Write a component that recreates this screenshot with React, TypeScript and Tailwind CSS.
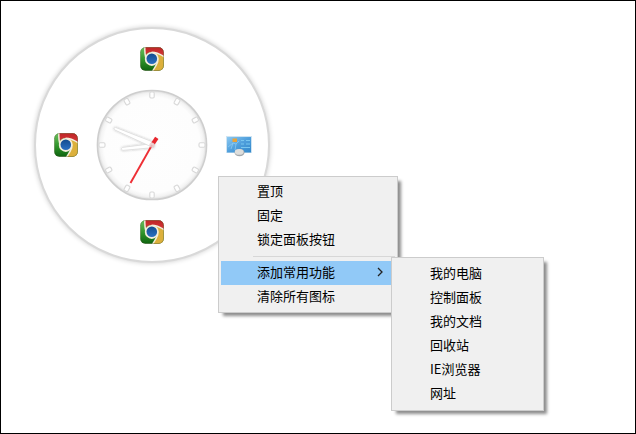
import { useState } from "react";
import type { ReactNode } from "react";

const TICKS = [0, 30, 60, 90, 120, 150, 180, 210, 240, 270, 300, 330];

const SUB_MENU = [
  "我的电脑",
  "控制面板",
  "我的文档",
  "回收站",
  "IE浏览器",
  "网址",
];

const ChromeIcon = () => (
  <svg viewBox="0 0 24 24" className="size-6" aria-hidden="true">
    <defs>
      <clipPath id="chrome-clip">
        <rect x="0.3" y="0.3" width="23.4" height="23.4" rx="5" />
      </clipPath>
      <linearGradient id="chrome-green" x1="0" y1="0" x2="0" y2="1">
        <stop offset="0" stopColor="#6cc060" />
        <stop offset="0.55" stopColor="#2f9329" />
        <stop offset="1" stopColor="#0d620f" />
      </linearGradient>
      <linearGradient id="chrome-red" x1="0" y1="0" x2="0" y2="1">
        <stop offset="0" stopColor="#bb2124" />
        <stop offset="1" stopColor="#d83c3a" />
      </linearGradient>
      <linearGradient id="chrome-blue" x1="0" y1="0" x2="0" y2="1">
        <stop offset="0" stopColor="#134c8e" />
        <stop offset="1" stopColor="#2a70c2" />
      </linearGradient>
    </defs>
    <g clipPath="url(#chrome-clip)">
      <rect width="24" height="24" fill="url(#chrome-green)" />
      <path
        d="M5 -1 C4.6 3 4.8 6 5.4 9 C7 5.8 9.6 4.8 12.5 5.2 C16 5.8 20 7 25 10 V-1 Z"
        fill="url(#chrome-red)"
      />
      <path
        d="M12.5 5 C17 6 21 7.5 25 10 V25 H11.8 C13.5 22.4 15.2 20 16.4 17.6 C18.8 13.6 17.4 7.6 12.5 5 Z"
        fill="#dcb03c"
      />
      <path
        d="M5 -1 C4.5 3.6 4.9 7.6 6 12 M11.6 5.2 C16.6 5.2 20.6 7.2 25 10.4 M17.8 14.4 C16.4 18.4 14.2 21.6 12 25"
        fill="none"
        stroke="#f3eddc"
        strokeWidth="1.5"
      />
      <circle cx="11.8" cy="11.9" r="7" fill="#f3eddc" />
    </g>
    <circle cx="11.8" cy="11.7" r="5.3" fill="url(#chrome-blue)" />
    <rect
      x="0.5"
      y="0.5"
      width="23"
      height="23"
      rx="5"
      fill="none"
      stroke="#5c4a30"
      strokeOpacity="0.25"
    />
  </svg>
);

const ControlPanelIcon = () => (
  <svg viewBox="0 0 26 24" className="h-6 w-[26px]" aria-hidden="true">
    <defs>
      <linearGradient id="panel-blue" x1="0" y1="0" x2="1" y2="1">
        <stop offset="0" stopColor="#8cc9f2" />
        <stop offset="0.5" stopColor="#4f9fdc" />
        <stop offset="1" stopColor="#3388cb" />
      </linearGradient>
    </defs>
    <rect x="0" y="3" width="26" height="17" fill="#cfe4f2" />
    <rect x="1" y="4" width="24" height="15.5" fill="url(#panel-blue)" />
    <path
      d="M2 14 L7 10 L10 11 L13 8 M7 10 L5 16 M10 11 L9 17"
      fill="none"
      stroke="#8fcdf4"
      strokeWidth="0.7"
    />
    <rect x="6.5" y="5.5" width="4.5" height="3.5" fill="#e9a43a" />
    <path
      d="M15 7.5 H18 M20 7.5 H24 M15 11 H18 M20 11 H24 M15 14.5 H24"
      stroke="#79c6f0"
      strokeWidth="1"
    />
    <ellipse cx="13.5" cy="19.6" rx="5" ry="3.6" fill="#a3a8ac" />
    <ellipse cx="13.2" cy="18.9" rx="4.4" ry="2.8" fill="#dededc" />
  </svg>
);

const Clock = () => (
  <svg
    viewBox="-57 -57 114 114"
    className="size-[114px]"
    role="img"
    aria-label="时钟"
  >
    <defs>
      <radialGradient id="face">
        <stop offset="0" stopColor="#fefefe" />
        <stop offset="0.88" stopColor="#fdfdfd" />
        <stop offset="0.95" stopColor="#f3f3f3" />
        <stop offset="1" stopColor="#d9d9d9" />
      </radialGradient>
      <filter id="soft" x="-50%" y="-50%" width="200%" height="200%">
        <feDropShadow dx="0" dy="0" stdDeviation="0.8" floodOpacity="0.25" />
      </filter>
    </defs>
    <circle r="54.6" fill="url(#face)" stroke="#cecece" strokeWidth="1.5" />
    {TICKS.map((angle) => (
      <rect
        key={angle}
        x="-2.2"
        y="-53"
        width="4.4"
        height="6"
        rx="1.2"
        transform={`rotate(${angle})`}
        fill="#fefefe"
        stroke="#d8d8d8"
        strokeWidth="1.1"
      />
    ))}
    <g fill="#ffffff" stroke="#dcdcdc" strokeWidth="0.8" filter="url(#soft)">
      <path d="M2 -1.6 L-29.5 2.4 Q-32 3.8 -29.5 5.4 L2 2.6 Z" />
      <path d="M2.5 -2.4 L-36.5 -17.6 Q-39.4 -17 -37.5 -15.2 L1 2.6 Z" />
    </g>
    <path d="M0 0 L-21.5 38" stroke="#ee2f35" strokeWidth="1.9" />
    <path d="M1 -1.5 L4.8 -7.2" stroke="#e8262d" strokeWidth="4" />
    <circle r="2.6" fill="#e9c9c9" fillOpacity="0.85" />
  </svg>
);

type DiscButtonProps = {
  label: string;
  className: string;
  children: ReactNode;
};

const DiscButton = ({ label, className, children }: DiscButtonProps) => (
  <button
    type="button"
    aria-label={label}
    className={`place-self-center ${className}`}
  >
    {children}
  </button>
);

type MenuItemProps = {
  label: string;
  active?: boolean;
  onClick?: () => void;
  children?: ReactNode;
};

const MenuItem = ({ label, active, onClick, children }: MenuItemProps) => (
  <li className="relative">
    <button
      type="button"
      onClick={onClick}
      className={`flex h-6 w-full items-center justify-between pr-3 pb-0.5 pl-9 text-left whitespace-nowrap hover:bg-[#91c9f7] ${
        active ? "bg-[#91c9f7]" : ""
      }`}
    >
      {label}
      {active !== undefined && (
        <svg viewBox="0 0 6 10" className="h-2.5 w-1.5" aria-hidden="true">
          <path
            d="M1 1 L5 5 L1 9"
            fill="none"
            stroke="#222222"
            strokeWidth="1.3"
          />
        </svg>
      )}
    </button>
    {children}
  </li>
);

const menuClass =
  "absolute border border-[#cccccc] bg-[#f0f0f0] px-0.5 text-[13px] leading-5 text-black shadow-[4px_4px_3px_-1px_rgba(0,0,0,0.45)]";

const App = () => {
  const [pinned, setPinned] = useState(false);
  const [subOpen, setSubOpen] = useState(true);

  return (
    <main className="relative min-h-screen overflow-hidden border border-black bg-white pt-[26px] pl-[33px] font-['Noto_Sans_CJK_SC',sans-serif]">
      <div className="grid size-[236px] grid-cols-[59px_114px_59px] grid-rows-[59px_114px_59px] rounded-full border-2 border-[#d9d9d9] bg-white shadow-[0_0_5px_rgba(0,0,0,0.2)]">
        <DiscButton label="Chrome" className="col-start-2 row-start-1">
          <ChromeIcon />
        </DiscButton>
        <DiscButton label="Chrome" className="col-start-1 row-start-2">
          <ChromeIcon />
        </DiscButton>
        <div className="col-start-2 row-start-2 place-self-center">
          <Clock />
        </div>
        <DiscButton label="控制面板" className="col-start-3 row-start-2">
          <ControlPanelIcon />
        </DiscButton>
        <DiscButton label="Chrome" className="col-start-2 row-start-3">
          <ChromeIcon />
        </DiscButton>
      </div>

      <ul className={`${menuClass} top-[175px] left-[217px] w-[180px] py-[3px]`}>
        <MenuItem label="置顶" onClick={() => setPinned(!pinned)} />
        <MenuItem label="固定" />
        <MenuItem label="锁定面板按钮" />
        <li className="flex h-[9px] items-center pl-8" role="separator">
          <span className="h-px w-full bg-[#d7d7d7]" />
        </li>
        <MenuItem
          label="添加常用功能"
          active={subOpen}
          onClick={() => setSubOpen(!subOpen)}
        >
          {subOpen && (
            <ul className={`${menuClass} -top-1 left-[170px] w-[153px] py-1`}>
              {SUB_MENU.map((label) => (
                <MenuItem key={label} label={label} />
              ))}
            </ul>
          )}
        </MenuItem>
        <MenuItem label="清除所有图标" />
      </ul>
    </main>
  );
};

export default App;
